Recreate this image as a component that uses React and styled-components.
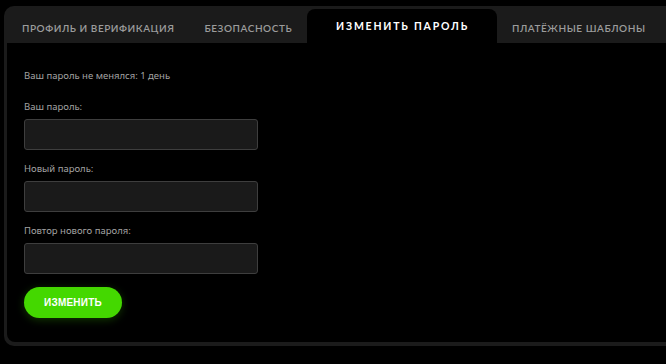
import React from 'react';
import styled, { createGlobalStyle } from 'styled-components';

const GlobalStyle = createGlobalStyle`
  html, body {
    margin: 0;
    padding: 0;
    background: #000;
    overflow: hidden;
  }
  * {
    box-sizing: border-box;
  }
`;

const Page = styled.div`
  width: 666px;
  height: 364px;
  padding: 6px 0 0 4px;
  overflow: hidden;
`;

const Card = styled.div`
  width: 700px;
  background: #1b1b1b;
  border-radius: 10px;
  padding: 0 0 4px 3px;
`;

const Tabs = styled.div`
  display: flex;
  align-items: flex-end;
  height: 37px;
`;

const Tab = styled.div`
  height: ${(p) => (p.active ? '34px' : '37px')};
  padding: ${(p) => (p.active ? '0 28px 0 29px' : '7px 15px 0')};
  display: flex;
  align-items: center;
  background: ${(p) => (p.active ? '#000' : 'transparent')};
  border-radius: 8px 8px 0 0;
  color: ${(p) => (p.active ? '#fff' : '#9c9c9c')};
  font-family: 'Lato', 'DejaVu Sans', sans-serif;
  font-size: ${(p) => (p.active ? '10.5px' : '10px')};
  font-weight: ${(p) => (p.active ? 700 : 600)};
  letter-spacing: ${(p) => (p.active ? '1.8px' : '0.55px')};
  text-transform: uppercase;
  white-space: nowrap;
  cursor: pointer;
`;

const Content = styled.div`
  background: #000;
  border-radius: 0 0 0 8px;
  height: 299px;
  padding: 26px 0 0 17px;
  font-family: 'Noto Sans', 'Open Sans', sans-serif;
`;

const Note = styled.div`
  font-size: 9.5px;
  color: #a3a3a3;
  line-height: 14px;
  margin-bottom: 16px;
`;

const Field = styled.div`
  margin-bottom: 11px;
`;

const Label = styled.label`
  display: block;
  font-size: 9.5px;
  color: #a3a3a3;
  line-height: 16px;
  margin-bottom: 4px;
`;

const Input = styled.input`
  display: block;
  width: 234px;
  height: 31px;
  background: #1a1a1a;
  border: 1px solid #3e3e3e;
  border-radius: 3px;
  color: #fff;
  outline: none;
  padding: 0 10px;
`;

const Button = styled.button`
  width: 98px;
  height: 31px;
  margin-top: 2px;
  border: 0;
  border-radius: 16px;
  background: #44d800;
  box-shadow: 0 2px 8px rgba(68, 216, 0, 0.25);
  color: #fff;
  font-family: 'Liberation Sans', Arial, sans-serif;
  font-size: 10px;
  font-weight: 700;
  letter-spacing: 0.2px;
  cursor: pointer;
`;

const tabs = ['Профиль и верификация', 'Безопасность', 'Изменить пароль', 'Платёжные шаблоны'];

const App = () => {
  return (
    <>
      <GlobalStyle />
      <Page>
        <Card>
          <Tabs>
            {tabs.map((t, i) => (
              <Tab key={t} active={i === 2}>
                {t}
              </Tab>
            ))}
          </Tabs>
          <Content>
            <Note>Ваш пароль не менялся: 1 день</Note>
            <Field>
              <Label>Ваш пароль:</Label>
              <Input type="password" />
            </Field>
            <Field>
              <Label>Новый пароль:</Label>
              <Input type="password" />
            </Field>
            <Field>
              <Label>Повтор нового пароля:</Label>
              <Input type="password" />
            </Field>
            <Button>ИЗМЕНИТЬ</Button>
          </Content>
        </Card>
      </Page>
    </>
  );
};

export default App;
